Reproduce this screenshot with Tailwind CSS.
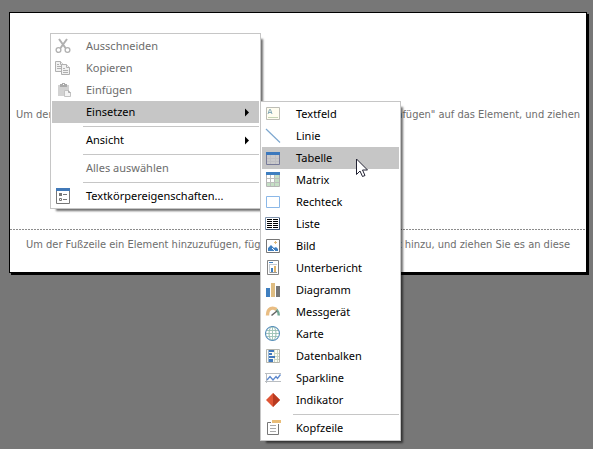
<!DOCTYPE html>
<html lang="de">
<head>
<meta charset="utf-8">
<title>Berichts-Designer</title>
<script src="https://cdn.jsdelivr.net/npm/@tailwindcss/browser@4"></script>
</head>
<body class="relative min-h-screen overflow-hidden bg-[#777777] pt-3 pr-1.5 pl-[9px] font-['Noto_Sans','Open_Sans',sans-serif] text-[11px] text-black">

<main class="border border-black bg-white font-['DejaVu_Sans_Condensed','DejaVu_Sans',sans-serif] text-[11px] text-[#6d6d6d] shadow-[2px_2px_0_0_#000]">
  <section class="flex h-54 items-center justify-between pr-1.5 pb-3 pl-1.5 whitespace-nowrap">
    <span>Um den</span><span>"Einfügen" auf das Element, und ziehen</span>
  </section>
  <div class="h-px bg-[repeating-linear-gradient(90deg,#8c8c8c_0_2px,#fff_2px_3px)]"></div>
  <section class="flex h-[42px] items-center justify-between pr-4 pb-3 pl-4 whitespace-nowrap">
    <span>Um der Fußzeile ein Element hinzuzufügen, fügen</span><span>Element hinzu, und ziehen Sie es an diese</span>
  </section>
</main>

<ul role="menu" aria-label="Kontextmenü" class="absolute top-[33px] left-[50px] w-[211px] border border-[#c6c6c6] bg-white p-px shadow-[4px_4px_2px_-2px_#707070]">
  <li><button disabled class="flex h-[22px] w-full items-center gap-[15px] pl-[3px] text-[#6d6d6d]">
    <svg class="size-4" viewBox="0 0 16 16" fill="none" stroke="#b0b0b0"><path d="M4 1L10.500 10M12 1L5.500 10" stroke-width="2"/><circle cx="3.500" cy="12" r="2.400" stroke-width="1.300"/><circle cx="12.500" cy="12" r="2.400" stroke-width="1.300"/></svg>
    <span>Ausschneiden</span></button></li>
  <li><button disabled class="flex h-[22px] w-full items-center gap-[15px] pl-[3px] text-[#6d6d6d]">
    <svg class="size-4" viewBox="0 0 16 16" fill="#f1f1f1" stroke="#b0b0b0"><path d="M.5 1.500H5.500L8.500 4.500V11.500H.5Z"/><path d="M5.500 1.500V4.500H8.500M2 4.500H4M2 6.500H6M2 8.500H6"/><path d="M6.500 4.500H11.500L14.500 7.500V14.500H6.500Z"/><path d="M11.500 4.500V7.500H14.500M8 8.500H10M8 10.500H13M8 12.500H13"/></svg>
    <span>Kopieren</span></button></li>
  <li><button disabled class="flex h-[22px] w-full items-center gap-[15px] pl-[3px] text-[#6d6d6d]">
    <svg class="size-4" viewBox="0 0 16 16"><path d="M3 3H14V14H3Z" fill="#d2d2d2"/><path d="M5 2H7V1H10V2H12V5H5Z" fill="#aaa"/><path d="M8 2H9V3H8Z" fill="#fff"/><path d="M9.500 8.500H13.500L15.500 10.500V14.500H9.500Z" fill="#f4f4f4" stroke="#c2c2c2"/><path d="M13.500 8.500V10.500H15.500" fill="none" stroke="#aaa"/></svg>
    <span>Einfügen</span></button></li>
  <li><button aria-haspopup="menu" aria-expanded="true" class="flex h-[22px] w-full items-center gap-[15px] bg-[#c6c6c6] pr-2.5 pl-[3px]">
    <span class="size-4"></span><span>Einsetzen</span>
    <svg class="ml-auto h-[9px] w-1" viewBox="0 0 4 9"><path d="M0 .5V8.500L4 4.500Z"/></svg></button></li>
  <li role="separator" class="my-[3px] ml-[31px] h-0"><div class="h-px bg-[#c6c6c6]"></div></li>
  <li><button aria-haspopup="menu" class="flex h-[22px] w-full items-center gap-[15px] pr-2.5 pl-[3px]">
    <span class="size-4"></span><span>Ansicht</span>
    <svg class="ml-auto h-[9px] w-1" viewBox="0 0 4 9"><path d="M0 .5V8.500L4 4.500Z"/></svg></button></li>
  <li role="separator" class="my-[3px] ml-[31px] h-0"><div class="h-px bg-[#c6c6c6]"></div></li>
  <li><button disabled class="flex h-[22px] w-full items-center gap-[15px] pl-[3px] text-[#6d6d6d]"><span class="size-4"></span><span>Alles auswählen</span></button></li>
  <li role="separator" class="my-[3px] ml-[31px] h-0"><div class="h-px bg-[#c6c6c6]"></div></li>
  <li><button class="flex h-[22px] w-full items-center gap-[15px] pl-[3px]">
    <svg class="size-4" viewBox="0 0 16 16"><path d="M1.500 .5H14.500V15.500H1.500Z" fill="#fff" stroke="#777"/><path d="M1 0H15V3H1Z" fill="#4179b8"/><path d="M4 5H7V8H4Z" fill="#777"/><path d="M4.500 10.500H6.500V12.500H4.500Z" fill="none" stroke="#777"/><path d="M8 6.500H12M8 11.500H12" stroke="#777"/></svg>
    <span>Textkörpereigenschaften...</span></button></li>
</ul>

<ul role="menu" aria-label="Einsetzen" class="absolute top-[101px] left-[260px] w-[141px] border border-[#c6c6c6] bg-white p-px shadow-[4px_4px_2px_-2px_#00000090]">
  <li><button class="flex h-[22px] w-full items-center gap-[15px] pl-[3px]">
    <svg class="size-4" viewBox="0 0 16 16"><path d="M1.500 1.500H14.500V13.500H1.500Z" fill="#fffdf0" stroke="#bdbdb5"/><path d="M3 8L4.500 3.500H5.500L7 8M4 6.500H6.500" fill="none" stroke="#83a9b8"/><path d="M3 11.500H13" stroke="#c5d5b4"/></svg>
    <span>Textfeld</span></button></li>
  <li><button class="flex h-[22px] w-full items-center gap-[15px] pl-[3px]">
    <svg class="size-4" viewBox="0 0 16 16"><path d="M1 1L15 14.500" stroke="#7da7cf" stroke-width="1.200"/></svg>
    <span>Linie</span></button></li>
  <li><button class="flex h-[22px] w-full items-center gap-[15px] bg-[#c6c6c6] pl-[3px]">
    <svg class="size-4" viewBox="0 0 16 16"><path d="M1.500 2.500H14.500V14.500H1.500Z" fill="#c9c9cb" stroke="#777a98"/><path d="M5.500 5V14M10.500 5V14M2 8.500H14M2 11.500H14" stroke="#bfbfc3"/><path d="M1 2H15V5H1Z" fill="#3b78bd"/></svg>
    <span>Tabelle</span></button></li>
  <li><button class="flex h-[22px] w-full items-center gap-[15px] pl-[3px]">
    <svg class="size-4" viewBox="0 0 16 16"><path d="M1.500 .5H14.500V14.500H1.500Z" fill="#fff" stroke="#b5b5b5"/><path d="M10 3H14V14H10ZM2 11H14V14H2Z" fill="#c5dfc5"/><path d="M5.500 3V14M9.500 3V14M2 6.500H14M2 10.500H14" stroke="#bcbebc"/><path d="M1 0H15V3H1Z" fill="#3f7fc0"/></svg>
    <span>Matrix</span></button></li>
  <li><button class="flex h-[22px] w-full items-center gap-[15px] pl-[3px]">
    <svg class="size-4" viewBox="0 0 16 16"><path d="M1.500 2.500H14.500V13.500H1.500Z" fill="#fff" stroke="#8bb8e8"/></svg>
    <span>Rechteck</span></button></li>
  <li><button class="flex h-[22px] w-full items-center gap-[15px] pl-[3px]">
    <svg class="size-4" viewBox="0 0 16 16"><path d="M.5 1.500H14.500V13.500H.5Z" fill="#fff" stroke="#7f93ad"/><path d="M14.500 2V13.500H1" fill="none" stroke="#3a5070"/><path d="M2 3.500H7M8 3.500H13M2 5.500H7M8 5.500H13M2 7.500H7M8 7.500H13M2 9.500H7M8 9.500H13M2 11.500H7M8 11.500H13" stroke="#000"/></svg>
    <span>Liste</span></button></li>
  <li><button class="flex h-[22px] w-full items-center gap-[15px] pl-[3px]">
    <svg class="size-4" viewBox="0 0 16 16"><path d="M1.500 1.500H14.500V14.500H1.500Z" fill="#fff" stroke="#777"/><path d="M3 13V10L6 7L9 10L11 9L13 11V13Z" fill="#3f7fc0"/><path d="M7 10L10 13" stroke="#fff"/><path d="M10.500 3V6M9 4.500H12" stroke="#e0b978"/></svg>
    <span>Bild</span></button></li>
  <li><button class="flex h-[22px] w-full items-center gap-[15px] pl-[3px]">
    <svg class="size-4" viewBox="0 0 16 16"><path d="M2.500 .5H13.500V14.500H2.500Z" fill="#fff" stroke="#858585"/><path d="M4 2.500H8" stroke="#3f7fc0"/><path d="M4 4.500H12M4.500 5V13" stroke="#c5cbd2"/><path d="M6 8H8V12H6Z" fill="#3f7fc0"/><path d="M9 6H11V12H9Z" fill="#dfb46d"/><path d="M5 12.500H12" stroke="#999"/></svg>
    <span>Unterbericht</span></button></li>
  <li><button class="flex h-[22px] w-full items-center gap-[15px] pl-[3px]">
    <svg class="size-4" viewBox="0 0 16 16"><path d="M1 6H5V15H1Z" fill="#3f7fc0"/><path d="M6 1H10V15H6Z" fill="#dfbd82"/><path d="M11 4H15V15H11Z" fill="#777"/></svg>
    <span>Diagramm</span></button></li>
  <li><button class="flex h-[22px] w-full items-center gap-[15px] pl-[3px]">
    <svg class="size-4" viewBox="0 0 16 16" fill="none"><path d="M2.500 11.500C2.500 3.500 8 3 11.500 5.500" stroke="#e9bd83" stroke-width="3.400"/><path d="M11.500 5.500Q13.800 8 13.800 11.500" stroke="#72a996" stroke-width="2.500"/><path d="M6.500 11.500L12 7" stroke="#666" stroke-width="1.600"/></svg>
    <span>Messgerät</span></button></li>
  <li><button class="flex h-[22px] w-full items-center gap-[15px] pl-[3px]">
    <svg class="size-4" viewBox="0 0 16 16" fill="none"><path d="M7.500 1V14M1 7.500H14M2 4.500H13M2 10.500H13" stroke="#a3c8bb"/><ellipse cx="7.500" cy="7.500" rx="3.500" ry="7" stroke="#94bbb0"/><circle cx="7.500" cy="7.500" r="7" stroke="#5a91bb" stroke-width="1.100"/></svg>
    <span>Karte</span></button></li>
  <li><button class="flex h-[22px] w-full items-center gap-[15px] pl-[3px]">
    <svg class="size-4" viewBox="0 0 16 16"><path d="M1.500 1.500H14.500V14.500H1.500Z" fill="#fbfbf4" stroke="#b5b5ad"/><path d="M9.500 2V14M12.500 2V14M9 5.500H14M9 8.500H14M9 11.500H14" stroke="#cbd8c5"/><path d="M4 2H9V4H4ZM4 5H7V7H4ZM4 8H10V10H4ZM4 11H8V14H4Z" fill="#4179bd"/><path d="M3.500 2V14" stroke="#9bb8d8"/></svg>
    <span>Datenbalken</span></button></li>
  <li><button class="flex h-[22px] w-full items-center gap-[15px] pl-[3px]">
    <svg class="size-4" viewBox="0 0 16 16" fill="none"><path d="M1.500 3V13M0 3.500H16M0 11.500H16" stroke="#b9bdc1"/><path d="M2 10L5 6.500L8 10L11 6.500L12.500 8.500L15.500 4.500" stroke="#5f8ace" stroke-width="1.300"/></svg>
    <span>Sparkline</span></button></li>
  <li><button class="flex h-[22px] w-full items-center gap-[15px] pl-[3px]">
    <svg class="size-4" viewBox="0 0 16 16"><path d="M8 1L15 8L8 15L1 8Z" fill="#e05535"/><path d="M8 1L15 8L8 15Z" fill="#b83a20"/></svg>
    <span>Indikator</span></button></li>
  <li role="separator" class="my-[3px] ml-[31px] h-0"><div class="h-px bg-[#c6c6c6]"></div></li>
  <li><button class="flex h-[22px] w-full items-center gap-[15px] pl-[3px]">
    <svg class="size-4" viewBox="0 0 16 16"><path d="M6 2.500H2.500V14.500H13.500V4" fill="#fff" stroke="#777"/><path d="M5 5.500H11M5 8.500H11M5 11.500H11" stroke="#aaa"/><path d="M7 0H16V3H7Z" fill="#e9bd78"/></svg>
    <span>Kopfzeile</span></button></li>
</ul>

<svg class="pointer-events-none absolute top-[158px] left-[356px] h-5 w-3" viewBox="0 0 12 20" aria-hidden="true"><path d="M.5 1V16.500L4 13L6.500 18.500L9 17.500L6.500 12H11.500Z" fill="#fff" stroke="#222233"/></svg>
</body>
</html>
